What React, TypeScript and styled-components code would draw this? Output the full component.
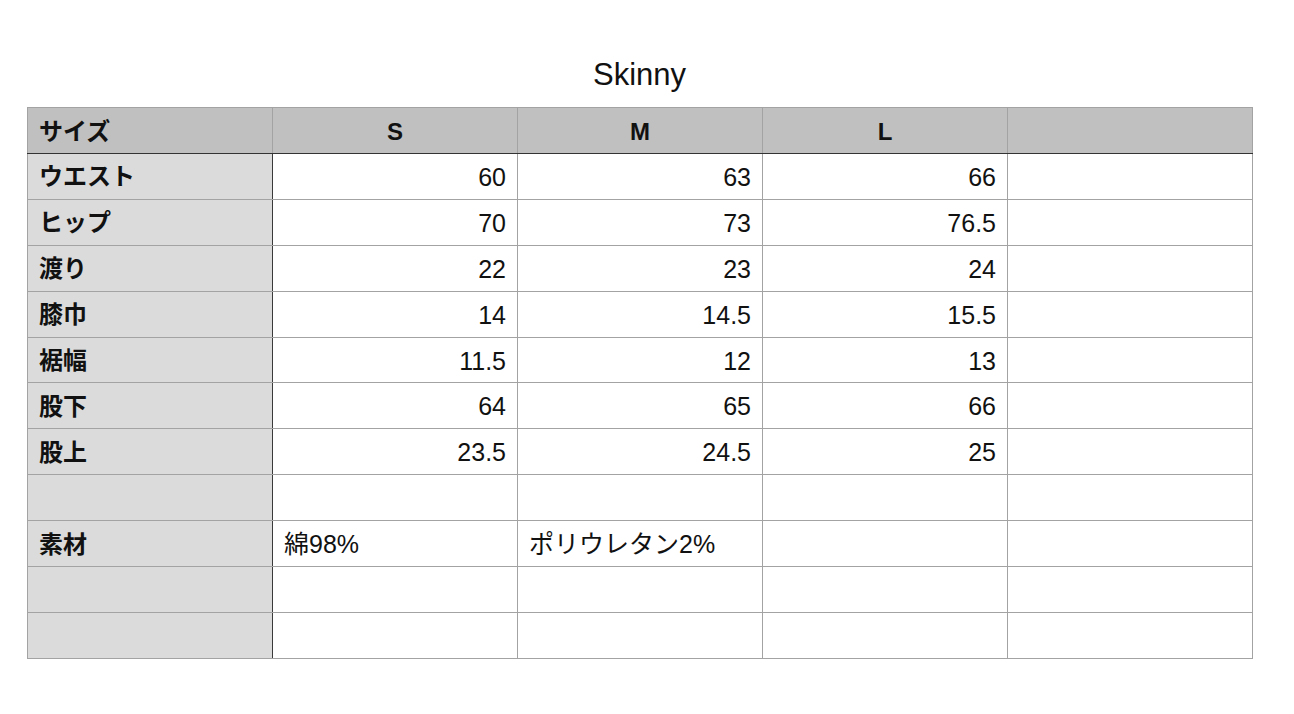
import React from "react";
import styled, { createGlobalStyle } from "styled-components";

const Global = createGlobalStyle`
  html, body { margin: 0; padding: 0; background: #ffffff; }
  body { font-family: "Liberation Sans", "Noto Sans CJK JP", sans-serif; color: #000; }
`;

const Page = styled.div`
  width: 1294px;
  height: 714px;
  box-sizing: border-box;
  padding: 55px 42px 0 27px;
  display: flex;
  flex-direction: column;
  align-items: stretch;
`;

const Title = styled.h1`
  margin: 0;
  height: 52px;
  text-align: center;
  font-family: "Liberation Sans", "Noto Sans CJK JP", sans-serif;
  font-weight: 400;
  font-size: 31px;
  line-height: 40px;
  color: #111;
`;

const Table = styled.table`
  width: 1226px;
  border-collapse: collapse;
  table-layout: fixed;
`;

type Kind = "label" | "num" | "text" | "head" | "corner";

const Cell = styled.td<{ $kind: Kind }>`
  height: 45.9px;
  box-sizing: border-box;
  padding: ${(p) => (p.$kind === "label" || p.$kind === "corner" ? "2px 11px 0 11px" : "2px 11px 0 11px")};
  border: 1px solid #a3a3a3;
  font-size: ${(p) => (p.$kind === "num" || p.$kind === "text" ? "25px" : "24px")};
  line-height: 1;
  font-family: "Liberation Sans", "Noto Sans CJK JP", sans-serif;
  text-align: ${(p) => (p.$kind === "num" ? "right" : p.$kind === "head" ? "center" : "left")};
  background: ${(p) =>
    p.$kind === "head" || p.$kind === "corner"
      ? "#bfc0bf"
      : p.$kind === "label"
      ? "#dbdbdb"
      : "#ffffff"};
  font-weight: ${(p) => (p.$kind === "head" || p.$kind === "corner" || p.$kind === "label" ? 700 : 400)};
  color: #111;
  ${(p) => (p.$kind === "label" ? "border-right: 1px solid #3a3a3a;" : "")}
`;

const HeadRow = styled.tr`
  td {
    border-bottom: 1px solid #333;
    height: 46px;
  }
`;

const Row = styled.tr``;

const rows: { label: string; vals: string[]; text?: boolean }[] = [
  { label: "ウエスト", vals: ["60", "63", "66", ""] },
  { label: "ヒップ", vals: ["70", "73", "76.5", ""] },
  { label: "渡り", vals: ["22", "23", "24", ""] },
  { label: "膝巾", vals: ["14", "14.5", "15.5", ""] },
  { label: "裾幅", vals: ["11.5", "12", "13", ""] },
  { label: "股下", vals: ["64", "65", "66", ""] },
  { label: "股上", vals: ["23.5", "24.5", "25", ""] },
  { label: "", vals: ["", "", "", ""] },
  { label: "素材", vals: ["綿98%", "ポリウレタン2%", "", ""], text: true },
  { label: "", vals: ["", "", "", ""] },
  { label: "", vals: ["", "", "", ""] },
];

export default function App() {
  return (
    <>
      <Global />
      <Page>
        <Title>Skinny</Title>
        <Table>
          <tbody>
            <HeadRow>
              <Cell $kind="corner">サイズ</Cell>
              <Cell $kind="head">S</Cell>
              <Cell $kind="head">M</Cell>
              <Cell $kind="head">L</Cell>
              <Cell $kind="head"></Cell>
            </HeadRow>
            {rows.map((r, i) => (
              <Row key={i}>
                <Cell $kind="label">{r.label}</Cell>
                {r.vals.map((v, j) => (
                  <Cell key={j} $kind={r.text ? "text" : "num"}>
                    {v}
                  </Cell>
                ))}
              </Row>
            ))}
          </tbody>
        </Table>
      </Page>
    </>
  );
}
